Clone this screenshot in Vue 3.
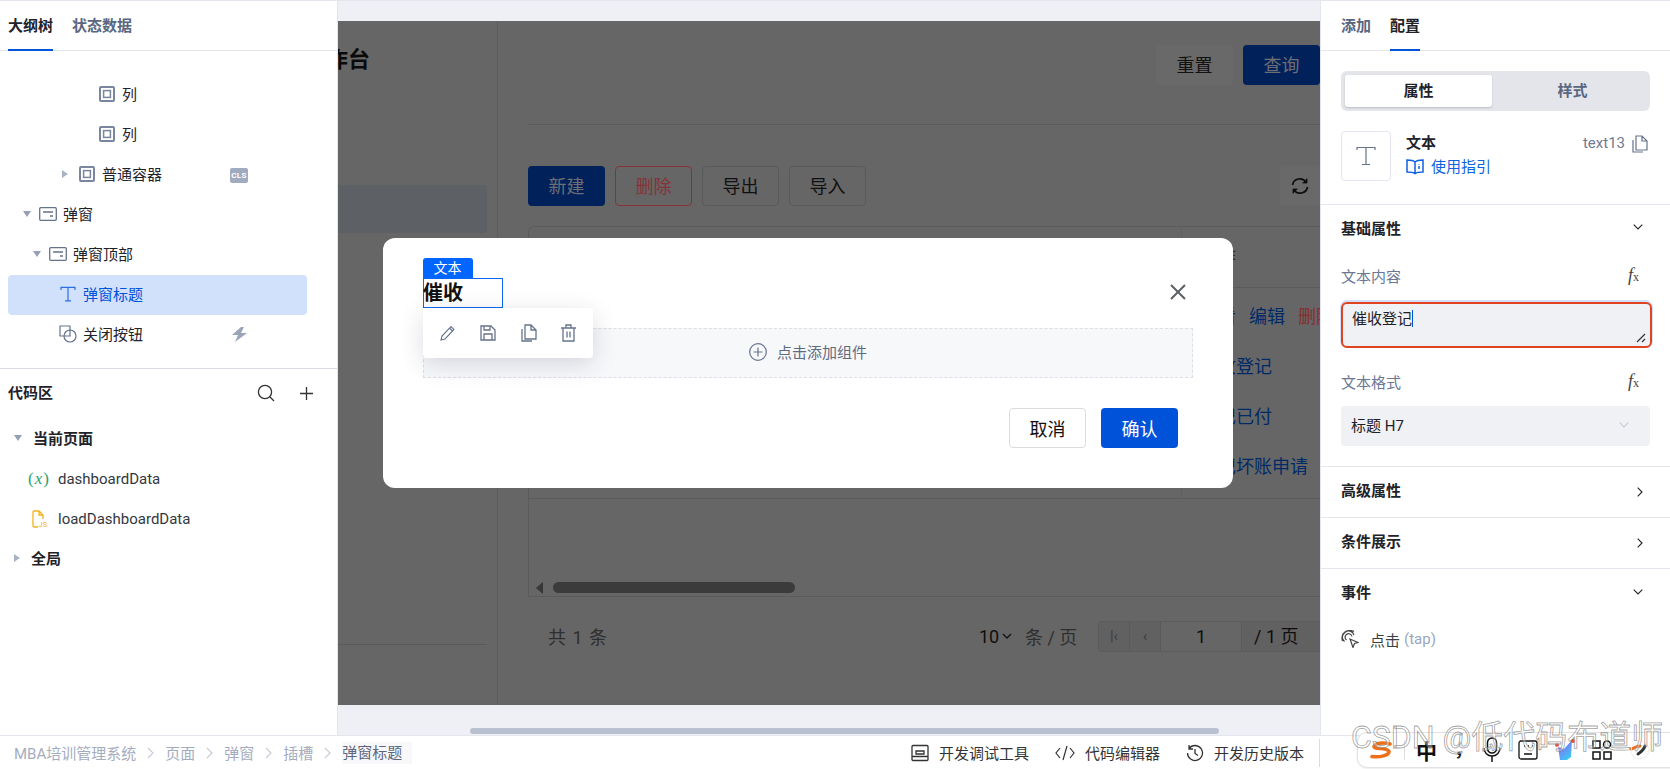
<script setup>
import { ref } from 'vue'

const outlineTab = ref('大纲树')
const sideTab = ref('配置')

const treeRows = [
  { label: '列', indent: 74, icon: 'box' },
  { label: '列', indent: 74, icon: 'box' },
  { label: '普通容器', indent: 54, icon: 'box', arrow: 'right', badge: 'cls' },
  { label: '弹窗', indent: 15, icon: 'modal', arrow: 'down' },
  { label: '弹窗顶部', indent: 25, icon: 'modal', arrow: 'down' },
  { label: '弹窗标题', indent: 35, icon: 'text', selected: true },
  { label: '关闭按钮', indent: 35, icon: 'shapes', badge: 'bolt' },
]

const breadcrumbs = ['MBA培训管理系统', '页面', '弹窗', '插槽']
const tableActions = ['催收登记', '登记已付', '标记坏账申请']
const collapsedGroups = [
  { title: '高级属性' },
  { title: '条件展示' },
]
</script>

<template>
  <div class="app">
    <div class="workspace">
      <!-- left: outline + code -->
      <aside class="outlinePanel">
        <div class="tabs">
          <span class="tab" :class="{ active: outlineTab === '大纲树' }">大纲树</span>
          <span class="tab">状态数据</span>
        </div>
        <div class="tree">
          <div
            v-for="(row, i) in treeRows"
            :key="i"
            class="treeRow"
            :class="{ selected: row.selected }"
            :style="{ paddingLeft: `${row.indent}px` }"
          >
            <span class="arrowSlot">
              <i v-if="row.arrow === 'right'" class="tri triRight"></i>
              <i v-if="row.arrow === 'down'" class="tri triDown"></i>
            </span>
            <span class="nodeIcon">
              <svg v-if="row.icon === 'box'" width="16" height="16" viewBox="0 0 16 16" fill="none" stroke="#7a869e" stroke-width="2">
                <rect x="1" y="1" width="14" height="14" rx="1" />
                <rect x="4.6" y="4.6" width="6.8" height="6.8" stroke-width="1.5" />
              </svg>
              <svg v-if="row.icon === 'modal'" width="18" height="14" viewBox="0 0 18 14" fill="none" stroke="#66738c" stroke-width="1.3">
                <rect x="0.7" y="0.7" width="16.6" height="12.6" rx="1" />
                <path d="M4 5h10M11 9h3" />
              </svg>
              <svg v-if="row.icon === 'text'" width="16" height="16" viewBox="0 0 16 16" fill="none" stroke="#2a6fe0" stroke-width="1.2">
                <path d="M1 4V1.4h14V4M8 1.4v13.4M5 14.8h6" />
              </svg>
              <svg v-if="row.icon === 'shapes'" width="18" height="18" viewBox="0 0 18 18" fill="none" stroke="#66738c" stroke-width="1.2">
                <path d="M5 11H1V1h10v5" />
                <circle cx="11" cy="11" r="6" />
                <path d="M5 11h6V5" />
              </svg>
            </span>
            <span class="nodeLabel">{{ row.label }}</span>
            <span v-if="row.badge === 'cls'" class="clsBadge">CLS</span>
            <svg v-if="row.badge === 'bolt'" class="bolt" width="18" height="15" viewBox="0 0 18 15">
              <path d="M11 0 2 8h6l-3 7 12-9h-6l3-6z" fill="#9aa5ba" />
            </svg>
          </div>
        </div>

        <div class="code">
          <div class="codeHead">
            <b>代码区</b>
            <div class="codeTools">
              <svg width="18" height="18" viewBox="0 0 18 18" fill="none" stroke="#333" stroke-width="1.3">
                <circle cx="8" cy="8" r="6.6" />
                <path d="m13 13 4 4" />
              </svg>
              <svg width="13" height="13" viewBox="0 0 13 13" fill="none" stroke="#333" stroke-width="1.3">
                <path d="M6.5 0v13M0 6.5h13" />
              </svg>
            </div>
          </div>
          <div class="codeRow codeGroup"><i class="tri triDown"></i><b>当前页面</b></div>
          <div class="codeRow codeItem">
            <span class="varIcon">(<em>x</em>)</span>
            <span>dashboardData</span>
          </div>
          <div class="codeRow codeItem">
            <svg class="jsIcon" width="16" height="18" viewBox="0 0 16 18" fill="none" stroke="#f5b21b" stroke-width="1.3">
              <path d="M6 17H2a1 1 0 0 1-1-1V2a1 1 0 0 1 1-1h5l4 4v4M7 1v4h4" />
              <text x="6.5" y="16.5" font-size="7.5" font-family="Roboto" fill="#f5b21b" stroke="none">JS</text>
            </svg>
            <span>loadDashboardData</span>
          </div>
          <div class="codeRow codeGroup"><i class="tri triRight"></i><b>全局</b></div>
        </div>
      </aside>

      <!-- canvas, dimmed by the modal mask -->
      <main class="canvas">
        <div class="page">
          <div class="pageSide">
            <div class="pageTitle">工作台</div>
            <div class="sideItem"></div>
            <div class="sideLine"></div>
          </div>
          <div class="pageMain">
            <div class="filter">
              <button type="button" class="btn soft">重置</button>
              <button type="button" class="btn primary">查询</button>
            </div>
            <div class="actions">
              <button type="button" class="btn primary">新建</button>
              <button type="button" class="btn danger">删除</button>
              <button type="button" class="btn plain">导出</button>
              <button type="button" class="btn plain">导入</button>
              <button type="button" class="btn refresh">
                <svg width="18" height="18" viewBox="0 0 18 18" fill="none" stroke="#0c0c0c" stroke-width="1.7">
                  <path d="M1.5 8A7.5 7.5 0 0 1 15 5M16.5 10A7.5 7.5 0 0 1 3 13" />
                  <path d="M16 1.5V6h-4.5M2 16.5V12h4.5" fill="#0c0c0c" stroke-width="0.8" />
                </svg>
              </button>
            </div>
            <div class="table">
              <div class="tableBody">
                <div class="fixedCol">
                  <div class="headCell">操作</div>
                  <div class="actionCell">
                    <div class="linkRow">
                      <span>查看</span><span>编辑</span><span class="red">删除</span>
                    </div>
                    <div v-for="a in tableActions" :key="a" class="linkRow">{{ a }}</div>
                  </div>
                </div>
              </div>
              <div class="hScroll">
                <i class="scrollLeft"></i>
                <i class="scrollThumb"></i>
              </div>
            </div>
            <div class="pager">
              <span class="total">共 1 条</span>
              <span class="size"><span class="sizeNum">10</span>
                <svg width="10" height="6" viewBox="0 0 10 6" fill="none" stroke="#111" stroke-width="1.3"><path d="m1 1 4 4 4-4" /></svg>
              </span>
              <span class="perPage">条 / 页</span>
              <div class="pagerBox">
                <span class="pagerBtn">|‹</span>
                <span class="pagerBtn">‹</span>
                <span class="pagerInput">1</span>
                <span class="pagerOf">/ 1 页</span>
              </div>
            </div>
          </div>
        </div>
        <div class="hBar"><i></i></div>
      </main>

      <!-- right: config -->
      <aside class="configPanel">
        <div class="tabs rightTabs">
          <span class="tab">添加</span>
          <span class="tab" :class="{ active: sideTab === '配置' }">配置</span>
        </div>
        <div class="segment">
          <span class="segOn">属性</span>
          <span class="segOff">样式</span>
        </div>
        <div class="compInfo">
          <div class="compIcon">
            <svg width="20" height="20" viewBox="0 0 20 20" fill="none" stroke="#66738c" stroke-width="1.2">
              <path d="M1 4V1.5h18V4M10 1.5v17M6 18.5h8" />
            </svg>
          </div>
          <div class="compText">
            <b>文本</b>
            <a class="guide">
              <svg width="18" height="16" viewBox="0 0 18 16" fill="none" stroke="#0e62e0" stroke-width="1.5">
                <path d="M9 3C7 1 4 1 1 1v12c3 0 6 0 8 1.6C11 13 14 13 17 13V1c-3 0-6 0-8 2zM9 3v11.6" />
                <path d="M13 5v.6M13 7v3" />
              </svg>
              使用指引
            </a>
          </div>
          <div class="compId">
            <span>text13</span>
            <svg width="16" height="18" viewBox="0 0 16 18" fill="none" stroke="#66738c" stroke-width="1.2">
              <path d="M4 1h6l5 5v9H4zM10 1v5h5M1 5v12h10" />
            </svg>
          </div>
        </div>

        <section class="cfgGroup">
          <div class="groupHead firstHead">
            <b>基础属性</b>
            <svg class="chev" width="10" height="6" viewBox="0 0 10 6" fill="none" stroke="#222" stroke-width="1.1"><path d="m.7.7 4.3 4.3L9.3.7" /></svg>
          </div>
          <div class="fieldHead field1">
            <span>文本内容</span>
            <span class="fx"><em>f</em>x</span>
          </div>
          <div class="area">
            <span>催收登记</span><i class="caret"></i>
            <svg class="resize" width="10" height="10" viewBox="0 0 10 10" fill="none" stroke="#333" stroke-width="1.2"><path d="M1 9 9 1M6 9l3-3" /></svg>
          </div>
          <div class="fieldHead field2">
            <span>文本格式</span>
            <span class="fx"><em>f</em>x</span>
          </div>
          <div class="select">
            <span>标题 H7</span>
            <svg width="10" height="6" viewBox="0 0 10 6" fill="none" stroke="#c6cad3" stroke-width="1.1"><path d="m.7.7 4.3 4.3L9.3.7" /></svg>
          </div>
        </section>

        <section v-for="g in collapsedGroups" :key="g.title" class="cfgGroup">
          <div class="groupHead collapsedHead">
            <b>{{ g.title }}</b>
            <svg class="chev" width="6" height="10" viewBox="0 0 6 10" fill="none" stroke="#222" stroke-width="1.1"><path d="m.7.7 4.3 4.3L.7 9.3" /></svg>
          </div>
        </section>

        <section class="cfgGroup lastGroup">
          <div class="groupHead">
            <b>事件</b>
            <svg class="chev" width="10" height="6" viewBox="0 0 10 6" fill="none" stroke="#222" stroke-width="1.1"><path d="m.7.7 4.3 4.3L9.3.7" /></svg>
          </div>
          <div class="eventRow">
            <svg width="18" height="18" viewBox="0 0 18 18" fill="none" stroke="#444" stroke-width="1.2">
              <path d="M12 17.5 9 9l8 3.5-3.5 1z" fill="#fff" />
              <path d="M5.5 10a3.5 3.5 0 1 1 5.5-3.5M3.5 11.5a6 6 0 1 1 9.5-6.5M1.5 11A8 8 0 0 1 13 1.5" />
            </svg>
            <span class="eventName">点击</span>
            <span class="eventKey">(tap)</span>
          </div>
        </section>
      </aside>
    </div>

    <footer class="status">
      <div class="crumbs">
        <template v-for="c in breadcrumbs" :key="c">
          <span>{{ c }}</span>
          <svg width="7" height="12" viewBox="0 0 7 12" fill="none" stroke="#c4cad6" stroke-width="1.1"><path d="m1 1 5 5-5 5" /></svg>
        </template>
        <span class="crumbNow">弹窗标题</span>
      </div>
      <div class="statusTools">
        <span class="statusTool">
          <svg width="18" height="18" viewBox="0 0 18 18" fill="none" stroke="#333" stroke-width="1.3">
            <rect x="1" y="1.5" width="16" height="15" rx="1" />
            <path d="M1 12.5h16M5 7h8v3H5z" />
          </svg>
          开发调试工具
        </span>
        <span class="statusTool">
          <svg width="20" height="16" viewBox="0 0 20 16" fill="none" stroke="#333" stroke-width="1.2">
            <path d="M5 3 1 8l4 5M15 3l4 5-4 5M12 1 8 15" />
          </svg>
          代码编辑器
        </span>
        <span class="statusTool">
          <svg width="18" height="18" viewBox="0 0 18 18" fill="none" stroke="#333" stroke-width="1.3">
            <path d="M3 4.5A7.5 7.5 0 1 1 1.5 9M3 1v4h4M9 5v4.5l3 2" />
          </svg>
          开发历史版本
        </span>
      </div>
    </footer>

    <!-- dialog over the dimmed canvas -->
    <div class="modal">
      <div class="modalHead">
        <div class="titleBox">
          <span class="titleTag">文本</span>
          催收
          <div class="floatBar">
            <svg width="16" height="16" viewBox="0 0 16 16" fill="none" stroke="#66738c" stroke-width="1.1">
              <path d="m1 15 1-4 9-9.5 3 3L5 14zM9.5 3l3 3" />
            </svg>
            <svg width="16" height="16" viewBox="0 0 16 16" fill="none" stroke="#66738c" stroke-width="1.3">
              <path d="M1 1h10l4 4v10H1zM4 1v4h6V1M4 15V9h8v6" />
            </svg>
            <svg width="16" height="18" viewBox="0 0 16 18" fill="none" stroke="#66738c" stroke-width="1.3">
              <path d="M4 1h6l5 5v9H4zM10 1v5h5M1 5v12h10" />
            </svg>
            <svg width="15" height="18" viewBox="0 0 15 18" fill="none" stroke="#66738c" stroke-width="1.3">
              <path d="M0 4h15M2 4v13h11V4M5 4V1h5v3M6 7.5v6M9 7.5v6" />
            </svg>
          </div>
        </div>
        <svg class="closeX" width="16" height="16" viewBox="0 0 16 16" fill="none" stroke="#5c6066" stroke-width="2">
          <path d="m1 1 14 14M15 1 1 15" />
        </svg>
      </div>
      <div class="slot">
        <svg width="18" height="18" viewBox="0 0 18 18" fill="none" stroke="#66738c" stroke-width="1.2">
          <circle cx="9" cy="9" r="8.3" />
          <path d="M9 4.5v9M4.5 9h9" />
        </svg>
        <span>点击添加组件</span>
      </div>
      <div class="modalFoot">
        <button type="button" class="mBtn cancel">取消</button>
        <button type="button" class="mBtn ok">确认</button>
      </div>
    </div>

    <!-- input method bar + watermark from the capture -->
    <div class="ime">
      <svg width="24" height="18" viewBox="0 0 24 18" fill="none" stroke="#ee6f16" stroke-width="3.6" stroke-linecap="round">
        <path d="M21 3C14 1 6 2 5 5.500c0 3 14 1 15 5 0 4-9 6-17 5" />
      </svg>
      <i class="imeSep"></i>
      <b class="imeZh">中</b>
      <b class="imeComma">，</b>
      <svg width="18" height="26" viewBox="0 0 18 26" fill="none" stroke="#111" stroke-width="1.5">
        <rect x="4.5" y="1" width="9" height="15" rx="4.5" />
        <path d="M1 11a8 8 0 0 0 16 0M9 19v6" />
      </svg>
      <svg width="20" height="20" viewBox="0 0 20 20" fill="none" stroke="#111" stroke-width="1.3">
        <rect x="1" y="1" width="18" height="18" rx="2" />
        <path d="M6 14h8M6 6h1M10 6h1M14 6h1" />
      </svg>
      <svg width="20" height="22" viewBox="0 0 20 22">
        <defs>
          <linearGradient id="imeGrad" x1="0" y1="0" x2="0.6" y2="1">
            <stop offset="0" stop-color="#a44ff0" />
            <stop offset="1" stop-color="#3bc6f5" />
          </linearGradient>
        </defs>
        <path d="M3 8l6 2 8-9-1 17-4 3H5z" fill="url(#imeGrad)" />
        <circle cx="2" cy="6" r="2" fill="#ee5a4a" />
        <circle cx="18" cy="2" r="2" fill="#ee4a2a" />
      </svg>
      <svg width="20" height="20" viewBox="0 0 20 20" fill="none" stroke="#111" stroke-width="1.5">
        <rect x="1" y="1" width="7" height="7" />
        <circle cx="15" cy="4.5" r="3.5" />
        <rect x="1" y="12" width="7" height="7" />
        <rect x="12" y="12" width="7" height="7" />
      </svg>
      <svg width="22" height="20" viewBox="0 0 22 20" fill="none" stroke-width="3" stroke-linecap="round">
        <path d="M2 9c3-1 6-3 9-3" stroke="#ee6f16" />
        <path d="M9 14c3-2 6-5 7-8" stroke="#333" />
        <circle cx="11" cy="10" r="9" stroke="#f0eeee" stroke-width="1" />
      </svg>
    </div>
    <div class="mark">CSDN @低代码布道师</div>
  </div>
</template>

<style>
html,
body {
  margin: 0;
  overflow: hidden;
  background: #fff;
}
</style>

<style scoped>
.app {
  position: relative;
  display: flex;
  flex-direction: column;
  width: 1670px;
  height: 769px;
  overflow: hidden;
  font-family: Roboto, "Noto Sans CJK SC", sans-serif;
  font-size: 15px;
  color: #1f2329;
}
b {
  font-weight: 700;
}
.workspace {
  flex: 0 0 735px;
  display: flex;
  border-top: 1px solid #e4e6ee;
  box-sizing: border-box;
}

/* left */
.outlinePanel {
  flex: 0 0 338px;
  min-width: 0;
  box-sizing: border-box;
  border-right: 1px solid #e4e6ee;
  background: #fff;
  z-index: 1;
}
.tabs {
  display: flex;
  gap: 19px;
  height: 50px;
  padding-left: 8px;
  box-sizing: border-box;
  border-bottom: 1px solid #e4e6ee;
}
.tab {
  line-height: 50px;
  height: 50px;
  box-sizing: border-box;
  font-weight: 700;
  color: #5a6680;
}
.tab.active {
  color: #1f2329;
  border-bottom: 2px solid #0052d9;
}
.tree {
  height: 318px;
  padding-top: 24px;
  box-sizing: border-box;
  border-bottom: 1px solid #d9dce5;
}
.treeRow {
  position: relative;
  display: flex;
  align-items: center;
  width: 299px;
  height: 40px;
  margin-left: 8px;
  padding-bottom: 3px;
  box-sizing: border-box;
  border-radius: 4px;
}
.treeRow.selected {
  background: #d2e1fb;
  color: #0052d9;
}
.arrowSlot {
  flex: 0 0 16px;
  display: flex;
  align-items: center;
}
.tri {
  display: inline-block;
  width: 0;
  height: 0;
}
.triRight {
  border-left: 6px solid #a9b2c4;
  border-top: 4px solid transparent;
  border-bottom: 4px solid transparent;
}
.triDown {
  border-top: 6px solid #95a0b6;
  border-left: 4px solid transparent;
  border-right: 4px solid transparent;
}
.nodeIcon {
  flex: 0 0 18px;
  display: flex;
  align-items: center;
  justify-content: center;
  margin-right: 6px;
}
.clsBadge {
  position: absolute;
  left: 222px;
  top: 13px;
  width: 18px;
  height: 15px;
  background: #a1abbf;
  border-radius: 2px;
  color: #fff;
  font-size: 8px;
  font-weight: 700;
  line-height: 15px;
  text-align: center;
  letter-spacing: 0.3px;
}
.bolt {
  position: absolute;
  left: 222px;
  top: 12px;
}
.codeHead {
  display: flex;
  justify-content: space-between;
  align-items: center;
  height: 50px;
  padding: 0 24px 0 8px;
  box-sizing: border-box;
}
.codeHead b {
  margin-bottom: 5px;
}
.codeTools {
  display: flex;
  align-items: center;
  gap: 25px;
  margin: 0 0 2px 1px;
}
.codeRow {
  display: flex;
  align-items: center;
  height: 40px;
  box-sizing: border-box;
}
.codeGroup {
  padding: 0 0 3px 14px;
  gap: 11px;
}
.codeItem {
  padding-left: 28px;
  color: #33383f;
}
.varIcon {
  width: 30px;
  color: #2ba471;
  font-family: "Liberation Serif", serif;
  font-size: 17px;
}
.varIcon em {
  margin: 0 1px;
}
.jsIcon {
  margin-left: 4px;
  margin-right: 10px;
}

/* canvas */
.canvas {
  flex: 1;
  min-width: 0;
  display: flex;
  flex-direction: column;
  padding-top: 20px;
  background: #eff0f5;
  box-sizing: border-box;
  overflow: hidden;
}
.page {
  flex: 0 0 684px;
  display: flex;
  background: #666;
}
.pageSide {
  flex: 0 0 160px;
  box-sizing: border-box;
  border-right: 1px solid #5c5c5c;
  overflow: hidden;
}
.pageTitle {
  width: 66px;
  margin: 27px 0 0 -34px;
  font-size: 22px;
  line-height: 24px;
  font-weight: 700;
  color: #0a0a0a;
}
.sideItem {
  width: 149px;
  height: 48px;
  margin-top: 113px;
  background: #5d6166;
  border-radius: 0 4px 4px 0;
}
.sideLine {
  width: 149px;
  margin-top: 411px;
  border-top: 1px solid #5a5a5a;
}
.pageMain {
  flex: 1;
  min-width: 0;
  padding-left: 30px;
}
.filter {
  display: flex;
  justify-content: flex-end;
  gap: 10px;
  height: 104px;
  padding-top: 24px;
  box-sizing: border-box;
  border-bottom: 1px solid #5b5b5b;
}
.btn {
  width: 77px;
  height: 40px;
  padding: 0 0 3px;
  border: 1px solid transparent;
  border-radius: 4px;
  font: inherit;
  font-size: 18px;
  color: #111;
  background: transparent;
  box-sizing: border-box;
}
.btn.soft {
  background: #696969;
}
.btn.primary {
  background: #00215a;
  color: #6e6e75;
}
.btn.danger {
  border-color: #853338;
  color: #853338;
}
.btn.plain {
  border-color: #5a5a5a;
}
.btn.refresh {
  margin-left: auto;
  width: 40px;
  padding: 0;
  background: #696969;
  display: flex;
  align-items: center;
  justify-content: center;
}
.actions {
  display: flex;
  gap: 10px;
  margin-top: 41px;
}
.table {
  height: 371px;
  margin-top: 20px;
  box-sizing: border-box;
  border: 1px solid #5b5b5b;
  border-right: 0;
  border-radius: 6px 0 0 0;
  overflow: hidden;
}
.tableBody {
  display: flex;
  justify-content: flex-end;
  height: 272px;
  border-bottom: 1px solid #5b5b5b;
  box-sizing: border-box;
}
.fixedCol {
  width: 139px;
  border-left: 1px solid #5f5f5f;
  box-sizing: border-box;
}
.headCell {
  height: 60px;
  line-height: 60px;
  padding-left: 18px;
  border-bottom: 1px solid #5b5b5b;
  font-size: 18px;
  color: #333;
}
.actionCell {
  padding: 4px 0 0 18px;
}
.linkRow {
  display: flex;
  gap: 13px;
  height: 50px;
  line-height: 50px;
  font-size: 18px;
  color: #002a66;
  white-space: nowrap;
}
.red {
  color: #852f30;
}
.hScroll {
  position: relative;
  height: 97px;
}
.scrollLeft {
  position: absolute;
  left: 7px;
  bottom: 2px;
  border-right: 7px solid #383838;
  border-top: 6px solid transparent;
  border-bottom: 6px solid transparent;
}
.scrollThumb {
  position: absolute;
  left: 24px;
  bottom: 3px;
  width: 242px;
  height: 11px;
  background: #3b3b3b;
  border-radius: 6px;
}
.pager {
  display: flex;
  align-items: center;
  height: 32px;
  margin-top: 23px;
  padding-left: 20px;
  font-size: 18px;
  color: #2e2e2e;
}
.total {
  flex: 0 0 431px;
  word-spacing: 2px;
}
.size {
  display: flex;
  align-items: center;
  gap: 3px;
  color: #0e0e0e;
  flex: 0 0 46px;
}
.perPage {
  flex: 0 0 73px;
  white-space: nowrap;
}
.pagerBox {
  display: flex;
  flex: 1;
  height: 31px;
  margin-right: -1px;
  border: 1px solid #5c5c5c;
  border-radius: 3px 0 0 3px;
  background: #616161;
  line-height: 29px;
  box-sizing: border-box;
}
.pagerBtn {
  flex: 0 0 30px;
  text-align: center;
  color: #3d3d3d;
  font-size: 15px;
  border-right: 1px solid #5a5a5a;
}
.pagerInput {
  flex: 0 0 80px;
  text-align: center;
  background: #666;
  color: #0e0e0e;
}
.pagerOf {
  padding-left: 12px;
  color: #0e0e0e;
  border-left: 1px solid #5a5a5a;
  flex: 1;
  white-space: nowrap;
}
.hBar {
  flex: 1;
  position: relative;
}
.hBar i {
  position: absolute;
  left: 132px;
  right: 101px;
  bottom: 1px;
  height: 6px;
  background: #b9c1d0;
  border-radius: 3px;
}

/* right */
.configPanel {
  flex: 0 0 350px;
  min-width: 0;
  box-sizing: border-box;
  border-left: 1px solid #e4e6ee;
  background: #fff;
}
.rightTabs {
  padding-left: 20px;
}
.segment {
  display: flex;
  align-items: center;
  width: 309px;
  height: 40px;
  margin: 20px 0 0 20px;
  padding: 4px;
  box-sizing: border-box;
  background: #e3e5ea;
  border-radius: 6px;
  font-weight: 700;
}
.segOn,
.segOff {
  flex: 0 0 147px;
  height: 32px;
  line-height: 32px;
  text-align: center;
}
.segOn {
  background: #fff;
  border-radius: 3px;
  box-shadow: 0 1px 2px rgba(0, 0, 0, 0.18);
}
.segOff {
  flex: 1;
  padding-left: 7px;
  color: #5a6680;
}
.compInfo {
  display: flex;
  height: 74px;
  margin-top: 20px;
  padding-left: 20px;
  box-sizing: border-box;
  border-bottom: 1px solid #e4e6ee;
}
.compIcon {
  width: 50px;
  height: 50px;
  box-sizing: border-box;
  border: 1px solid #e4e6ee;
  border-radius: 4px;
  display: flex;
  align-items: center;
  justify-content: center;
}
.compText {
  margin-left: 15px;
  display: flex;
  flex-direction: column;
  gap: 4px;
  line-height: 20px;
  padding-top: 2px;
}
.guide {
  display: flex;
  align-items: center;
  gap: 7px;
  color: #0e62e0;
}
.compId {
  margin-left: auto;
  margin-right: 22px;
  display: flex;
  align-items: flex-start;
  gap: 7px;
  padding-top: 2px;
  line-height: 20px;
  color: #6f7a92;
}
.compId svg {
  margin-top: 2px;
}
.cfgGroup {
  padding: 0 20px;
  border-bottom: 1px solid #e4e6ee;
}
.lastGroup {
  border-bottom: 0;
}
.groupHead {
  display: flex;
  align-items: center;
  justify-content: space-between;
  height: 50px;
  padding-bottom: 2px;
  box-sizing: border-box;
}
.firstHead {
  height: 46px;
}
.lastGroup .groupHead {
  height: 47px;
}
.collapsedHead {
  padding-bottom: 0;
}
.collapsedHead b {
  margin-bottom: 5px;
}
.chev {
  margin-right: 7px;
}
.fieldHead {
  display: flex;
  justify-content: space-between;
  align-items: center;
  height: 24px;
  padding-bottom: 1px;
  box-sizing: border-box;
  color: #6b7794;
}
.field1 {
  margin-top: 13px;
}
.field2 {
  margin-top: 22px;
}
.fx {
  margin-right: 11px;
  font-family: "Liberation Serif", serif;
  font-size: 12px;
  color: #444;
}
.fx em {
  font-size: 18px;
}
.area {
  position: relative;
  width: 311px;
  height: 46px;
  margin-top: 14px;
  padding: 5px 9px;
  box-sizing: border-box;
  background: #f0f1f5;
  border: 2px solid #e0431d;
  border-radius: 6px;
  box-shadow: 0 -1px 0 1px #d2e1fb;
  font-size: 15px;
  line-height: 20px;
}
.caret {
  display: inline-block;
  width: 1px;
  height: 17px;
  background: #0052d9;
  vertical-align: -3px;
}
.resize {
  position: absolute;
  right: 4px;
  bottom: 3px;
}
.select {
  display: flex;
  align-items: center;
  justify-content: space-between;
  width: 309px;
  height: 40px;
  margin: 12px 0 20px;
  padding: 0 21px 3px 10px;
  box-sizing: border-box;
  background: #f0f1f5;
  border-radius: 4px;
}
.eventRow {
  display: flex;
  align-items: center;
  height: 40px;
  margin-top: 4px;
  padding-bottom: 2px;
  box-sizing: border-box;
}
.eventName {
  margin-left: 11px;
  color: #3a3f47;
}
.eventKey {
  margin-left: 4px;
  color: #9aa6bf;
}

/* status bar */
.status {
  flex: 1;
  display: flex;
  align-items: center;
  justify-content: space-between;
  border-top: 1px solid #e4e6ee;
  padding-left: 14px;
  color: #333;
}
.crumbs {
  display: flex;
  align-items: center;
  gap: 11px;
  color: #a4adc0;
}
.crumbNow {
  color: #5b6680;
  padding-right: 10px;
  background: #f8f8fa;
  line-height: 22px;
}
.statusTools {
  display: flex;
  align-items: center;
  gap: 26px;
  width: 409px;
  height: 28px;
  box-sizing: border-box;
  border-right: 1px solid #d9dce5;
  margin-right: 350px;
  padding-right: 14px;
}
.statusTool {
  display: flex;
  align-items: center;
  gap: 10px;
  white-space: nowrap;
}

/* modal */
.modal {
  position: absolute;
  left: 383px;
  top: 238px;
  width: 850px;
  height: 250px;
  padding: 40px 40px 0;
  box-sizing: border-box;
  background: #fff;
  border-radius: 12px;
  z-index: 2;
}
.modalHead {
  display: flex;
  align-items: center;
  justify-content: space-between;
  height: 30px;
  padding: 0 7px 2px 0;
  box-sizing: border-box;
}
.titleBox {
  position: relative;
  align-self: flex-start;
  width: 80px;
  height: 30px;
  box-sizing: border-box;
  border: 1px solid #0b66f5;
  font-size: 20px;
  font-weight: 700;
  line-height: 28px;
  color: #111;
  text-indent: -1px;
}
.titleTag {
  position: absolute;
  left: -1px;
  bottom: 100%;
  margin-bottom: 1px;
  width: 50px;
  height: 20px;
  background: #0066ff;
  border-radius: 3px 3px 0 0;
  color: #fff;
  font-size: 14px;
  font-weight: 400;
  line-height: 20px;
  text-align: center;
}
.floatBar {
  position: absolute;
  left: -1px;
  top: 100%;
  margin-top: 1px;
  z-index: 1;
  display: flex;
  align-items: center;
  justify-content: space-between;
  width: 170px;
  height: 50px;
  padding: 0 17px;
  box-sizing: border-box;
  background: #fff;
  border-radius: 4px;
  box-shadow: 0 6px 24px rgba(30, 40, 70, 0.16);
}
.slot {
  display: flex;
  align-items: center;
  justify-content: center;
  gap: 10px;
  height: 50px;
  margin-top: 20px;
  padding-bottom: 3px;
  box-sizing: border-box;
  background: #f7f8fa;
  border: 1px dashed #dcdfe6;
  font-size: 15px;
  color: #5e6a82;
}
.modalFoot {
  display: flex;
  justify-content: flex-end;
  gap: 15px;
  margin-top: 30px;
  padding-right: 15px;
}
.mBtn {
  width: 77px;
  height: 40px;
  border-radius: 4px;
  box-sizing: border-box;
  font: inherit;
  font-size: 18px;
}
.cancel {
  background: #fff;
  border: 1px solid #dcdcdc;
  color: #111;
}
.ok {
  background: #0052d9;
  border: 0;
  color: #fff;
}

/* ime + watermark */
.ime {
  position: absolute;
  left: 1357px;
  top: 732px;
  width: 320px;
  height: 36px;
  box-sizing: border-box;
  display: flex;
  align-items: center;
  gap: 17px;
  padding: 0 0 0 11px;
  background: #fff;
  border: 1px solid #e2e2e2;
  border-radius: 10px 0 0 10px;
  box-shadow: 0 1px 2px rgba(0, 0, 0, 0.08);
  z-index: 3;
}
.imeSep {
  width: 1px;
  height: 20px;
  background: #ddd;
  margin: 0 -6px;
}
.imeZh {
  font-size: 21px;
  color: #111;
}
.imeComma {
  font-size: 18px;
  width: 12px;
  line-height: 20px;
  color: #111;
}
.mark {
  position: absolute;
  left: 1351px;
  top: 717px;
  z-index: 4;
  font-size: 32px;
  line-height: 40px;
  white-space: nowrap;
  font-weight: 400;
  color: rgba(255, 255, 255, 0.35);
  -webkit-text-stroke: 0.8px rgba(120, 120, 120, 0.7);
  pointer-events: none;
}
</style>
